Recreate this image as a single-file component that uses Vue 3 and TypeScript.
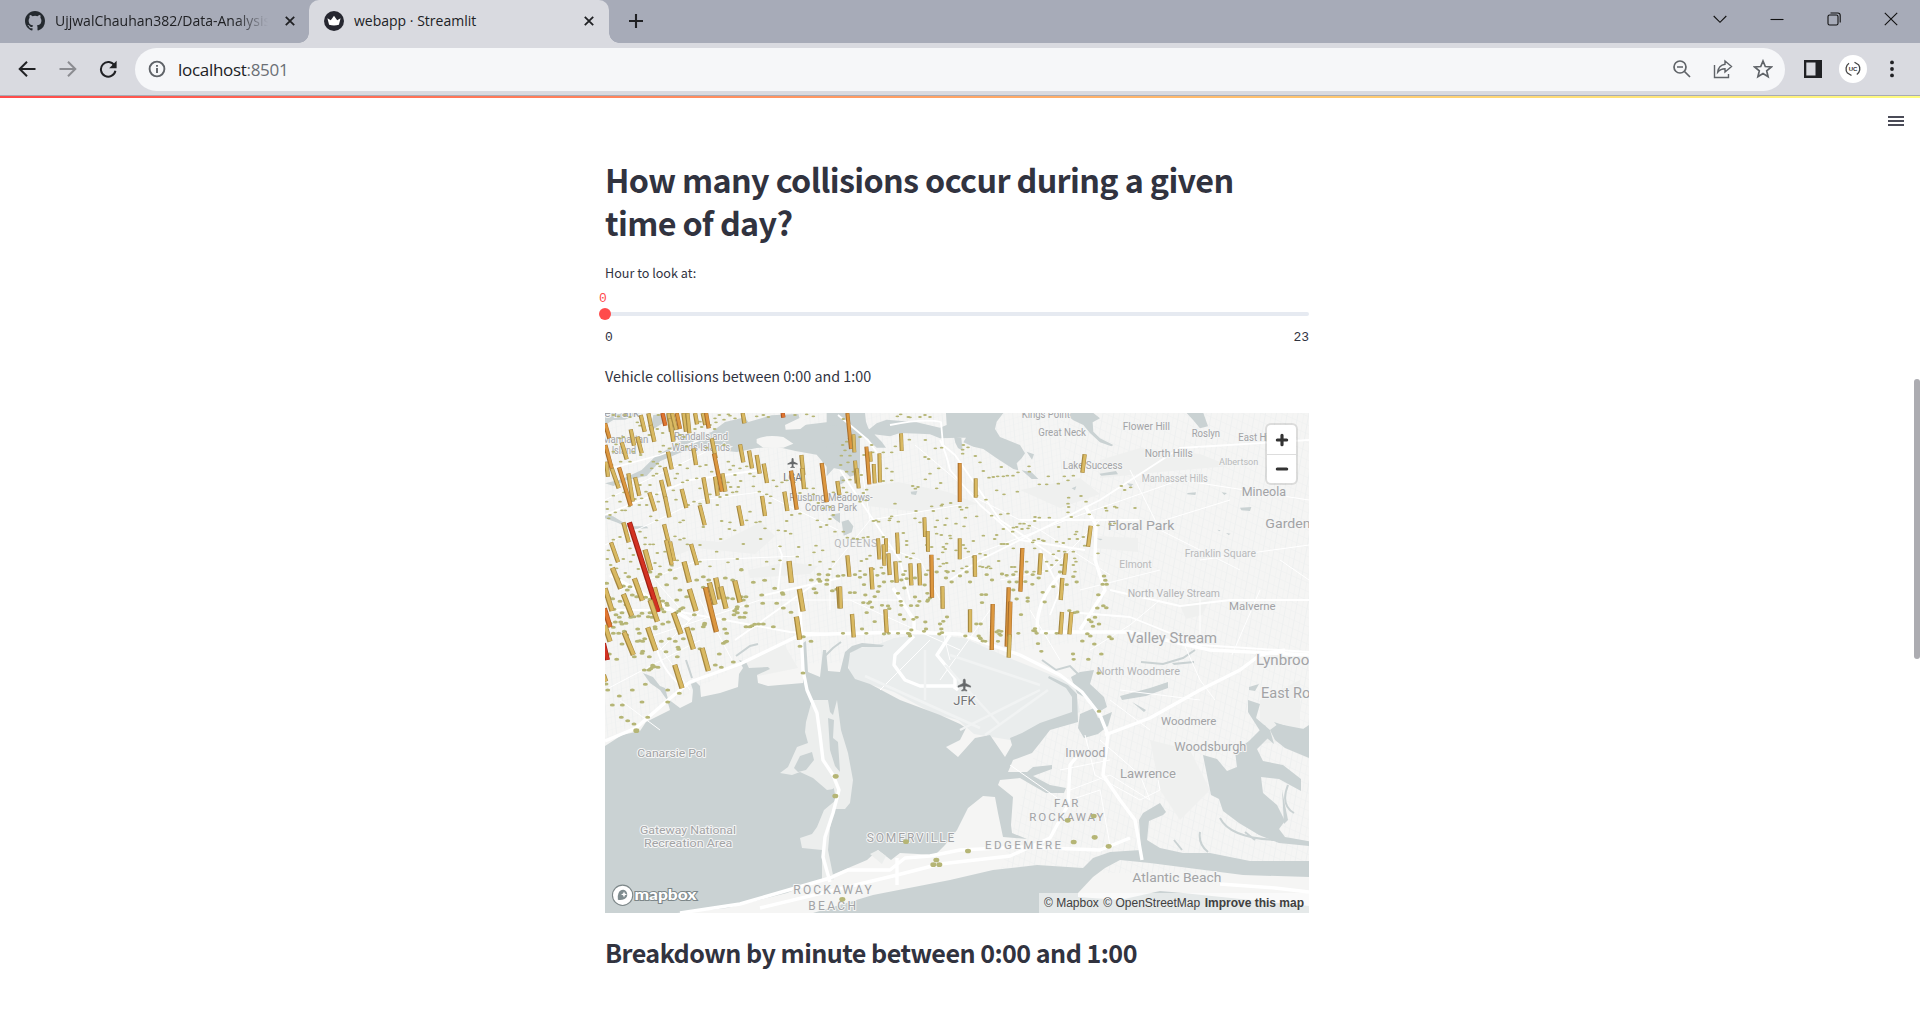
<script setup lang="ts">
type Kind = 'y' | 'o' | 'v' | 'r'
interface Tile {
  x: number
  y: number
  rx: number
  ry: number
  w: number
  dots: string
  bars: string
}
interface Label {
  t: string
  x: number
  y: number
  w: number
  s: number
  c?: string
}

/* Each tile stores its geometry in thirds of a pixel, relative to its origin. */
const tiles: Tile[] = [
  {
    x: 600, y: 405, rx: 5.6, ry: 2.8, w: 13,
    dots: '40,30 55,34 75,30 90,36 175,30 345,40 358,30 372,44 390,32 405,40 385,28 348,52 470,34 490,30 505,36 585,30 620,28 640,34 112,52 120,62 148,90 172,72 188,84 240,90 252,96 300,50 305,66 330,60 344,72 285,72 190,122 180,140 208,130 230,118 260,125 320,128 372,120 60,100 70,96 48,118 40,140 100,140 122,150 90,170 62,170 35,180 172,176 180,184 160,170 240,180 262,190 300,184 318,180 335,200 232,206 226,220 248,232 262,226 290,220 300,250 160,212 170,206 150,240 155,190 126,210 120,240 138,260 72,262 88,304 76,316 66,316 60,290 105,282 125,280 175,290 170,268 220,256 228,284 265,300 282,290 300,296 330,268 360,276 352,300 380,270 398,262 384,232 392,246 410,260 415,246 422,228 405,210 390,194 450,206 462,214 440,184 385,170 400,182 420,190 460,244 478,260 500,268 512,274 510,294 530,244 546,232 520,226 560,226 582,232 600,264 620,250 640,268 632,286 655,294 670,310 690,306 700,330 652,346 690,342 680,360 662,366 705,380 640,250 700,262 170,346 250,346 240,352 310,366 362,402 404,376 388,372 430,417 365,348 390,352 450,320 440,346 480,350 495,370 535,376 560,348 575,330 600,326 556,378 572,386 648,422 642,442 668,436 596,426 540,424 592,455 540,466 482,402 468,352 412,462 384,472 330,484 424,492 300,470 350,440 136,398 120,380 90,430 60,396 150,418 160,418 135,418 172,444 212,438 232,466 216,482 180,484 165,474 92,470 70,462 100,450 115,492 76,504 50,490 32,480 22,462 25,436 40,404 240,404 252,400 262,418 225,394 195,440 300,420 500,470 520,492 630,480 690,492 700,470 660,470 30,330 46,322 26,340 118,300 140,300 152,334 22,312 20,290 40,272',
    bars: 'v187,24,196,62 y122,30,134,80 y145,25,155,75 y152,60,163,110 y92,73,102,122 y112,95,125,145 y65,112,80,163 y205,24,213,80 y209,40,220,110 y216,24,228,75 o230,24,240,72 y250,24,258,80 y262,24,268,85 y285,24,291,58 y308,24,316,60 o318,24,326,70 y428,24,433,55 v548,24,550,38 y335,100,347,160 y204,140,215,193 y280,130,288,180 y420,118,430,172 y447,137,456,190 y470,150,479,206 y491,176,501,234 y604,150,610,210 y606,190,612,252 y367,205,376,260 o342,146,365,260 y345,215,353,272 y310,217,324,296 y553,260,562,318 o573,197,590,314 o665,174,680,292 y712,228,718,270 o15,55,28,100 y18,170,24,215 o16,120,36,195 y35,190,56,250 y85,205,98,290 o57,187,92,303 y105,217,118,272 y148,262,165,318 y194,187,208,244 y183,225,196,280 y195,275,208,337 y245,252,259,309 y299,301,314,361 y415,302,427,362 y486,273,495,333 y70,352,86,412 y33,412,54,472 y192,358,205,410 y210,410,222,468 y198,405,215,480 y273,417,291,480',
  },
  {
    x: 840, y: 405, rx: 5.6, ry: 2.8, w: 12,
    dots: '172,34 182,28 210,37 240,36 255,30 270,36 205,36 10,42 28,100 20,110 8,120 4,152 30,152 15,136 60,96 72,150 95,120 98,142 130,142 155,142 166,124 208,104 256,105 305,128 286,130 370,120 384,127 368,134 368,146 406,153 255,156 266,162 296,190 270,206 256,223 302,234 218,243 234,246 226,251 156,200 140,190 155,226 130,228 420,172 430,198 484,186 447,218 460,216 473,214 490,214 502,212 519,212 534,202 567,184 568,200 598,238 620,238 655,236 625,214 673,214 684,226 700,212 470,256 492,268 438,284 532,260 290,250 410,272 80,254 70,264 20,262 10,248 60,290 78,286 165,296 228,318 275,304 307,298 332,294 280,318 304,302 365,314 380,308 360,306 100,348 116,350 108,346 150,340 155,334 148,346 175,350 190,384 200,408 225,340 240,352 292,346 320,340 315,360 290,386 304,390 286,366 330,392 348,356 372,364 376,338 410,334 455,332 482,328 504,326 520,368 530,366 546,372 540,356 552,356 568,362 564,370 584,348 585,336 598,338 628,338 656,366 686,278 684,296 686,306 684,322 694,336 518,380 490,372 470,390 484,417 492,417 502,417 464,402 520,430 578,412 582,406 608,406 596,402 612,408 584,430 650,410 670,414 656,438 674,440 688,402 706,388 712,402 400,408 430,392 332,400 320,416 310,426 316,432 308,442 275,426 260,420 220,445 200,420 200,456 212,460 295,462 370,420 376,430 348,436 385,440 420,446 436,450 400,456 428,486 446,484 440,488 452,490 420,484 476,468 515,486 524,486 528,500 582,500 560,470 620,470 635,480 650,466 664,480 620,498 380,484 366,490 340,498 318,498 300,484 310,476 320,474 90,452 80,462 64,468 60,498 52,402 40,400 22,398 10,380 70,398 84,396 130,396 100,492 124,488 180,470 196,498 264,496 640,448 700,440 704,460 700,480 705,500 2,180 24,172 40,200 20,200 64,210 10,226 30,224',
    bars: 'o22,24,33,132 y40,88,43,142 y183,85,185,138 y90,140,92,170 o79,125,88,238 y101,177,104,235 y118,145,120,232 y45,167,50,235 y50,190,56,250 o359,174,359,291 y407,220,407,278 y253,337,255,396 y263,378,264,440 y359,400,359,463 y171,383,174,446 y138,400,138,440 y114,400,118,463 y130,418,133,482',
  },
  {
    x: 1080, y: 405, rx: 5.6, ry: 2.8, w: 13,
    dots: '124,243 134,255 152,247 77,309 80,317 104,305 110,308 165,309 18,290 3,273 28,328 54,361 90,357 104,355 10,396 14,422 54,445 -10,380 -12,470',
    bars: 'y14,148,7,203 y32,362,24,425',
  },
  {
    x: 600, y: 570, rx: 7.5, ry: 4.5, w: 16,
    dots: '180,13 226,25 172,20 424,0 376,24 398,30 460,37 494,31 524,55 485,75 547,68 549,73 657,13 684,14 681,30 656,28 634,30 680,43 660,34 642,56 648,68 697,62 714,18 710,58 488,100 550,114 573,127 530,100 438,170 450,170 464,163 476,162 490,162 456,167 520,170 440,108 424,80 430,90 438,80 404,122 410,116 402,134 420,142 432,142 412,128 436,128 372,148 374,177 283,134 313,164 310,170 278,177 314,160 249,113 242,117 236,123 228,128 200,100 202,106 188,93 185,118 192,125 176,84 137,82 150,88 97,75 110,80 90,50 82,60 70,48 26,82 38,86 60,94 78,104 42,118 66,128 48,134 58,142 62,156 78,160 46,156 40,172 30,160 66,162 92,142 102,140 116,138 126,130 150,128 145,140 156,142 165,170 166,176 188,162 205,156 113,177 118,190 73,184 56,190 40,190 80,195 66,222 120,212 128,214 112,214 134,206 184,214 208,206 226,214 250,206 270,200 198,245 234,232 236,238 232,260 148,260 128,244 126,250 103,260 50,268 28,252 133,300 147,300 157,292 158,286 174,292 164,290 152,296 136,343 97,360 58,378 23,360 18,342 37,405 67,405 126,396 203,360 238,370 203,396 64,442 83,452 102,462 109,482 143,442 400,276 364,292 346,285 358,252 380,214 370,220 376,216 633,214 600,229 609,309 610,200 300,236 380,190 210,0 150,6 20,40 54,26 86,20 200,44 240,60 260,80 230,90 310,20 326,30 290,30 310,52 382,84 398,86 412,110',
    bars: 'y37,-7,62,56 y252,-25,268,37 y567,-27,574,38 y135,-61,152,1 y103,25,127,92 y70,72,95,138 y163,52,180,115 r88,-143,174,126 y150,90,172,155 y15,55,36,123 v13,115,30,172 y14,165,30,215 r10,220,22,270 y10,315,17,335 y72,186,100,255 y143,172,167,242 y220,128,243,192 y268,57,288,123 y328,38,345,104 o316,52,349,186 y347,23,360,88 y362,50,378,116 y404,32,420,97 y598,57,609,124 y589,140,599,209 y716,50,720,115 y260,172,280,238 y306,234,325,303 y224,284,246,355',
  },
  {
    x: 840, y: 570, rx: 6.6, ry: 4.2, w: 13,
    dots: '10,16 45,14 60,22 75,14 72,44 118,49 132,36 112,16 130,10 156,34 184,30 190,14 200,26 193,54 225,24 225,81 258,14 254,45 262,70 290,6 318,24 323,6 335,36 360,18 380,6 390,36 425,74 438,74 426,98 456,30 440,14 486,12 500,16 508,36 530,36 520,14 560,6 556,35 577,43 563,84 563,94 530,87 608,67 614,96 640,50 660,6 680,44 700,20 710,36 30,68 44,68 76,75 70,98 85,100 90,96 104,80 96,112 126,106 144,108 148,116 114,65 174,70 182,94 184,106 213,107 232,107 238,94 262,94 270,84 264,90 80,128 104,155 66,177 79,190 9,190 180,134 192,148 220,148 230,142 174,190 208,192 210,198 214,180 204,190 258,177 252,184 256,156 304,177 306,188 298,192 300,162 310,154 321,141 409,162 422,162 416,198 422,206 428,213 436,214 420,204 376,198 535,190 543,134 470,186 478,192 484,184 476,182 474,214 482,196 585,176 580,182 590,190 618,190 586,184 594,221 604,244 699,252 701,268 704,128 712,126 688,122 146,190 132,192 650,190 520,60 596,24 578,14',
    bars: 'y22,-44,28,20 y145,-50,149,15 y93,-8,97,58 y166,-26,170,38 y211,-20,214,46 y237,-20,240,46 o274,-46,276,83 y404,-44,405,20 o547,-66,541,65 y602,-50,598,14 y678,-50,672,14 y307,49,308,116 y0,50,2,115 y36,132,41,202 y136,118,140,188 y390,118,390,187 o458,102,455,240 o506,52,500,230 o511,95,508,200 y509,193,506,263 y667,24,662,90 y666,126,661,193 y694,126,688,193',
  },
  {
    x: 1080, y: 570, rx: 7, ry: 4.5, w: 13,
    dots: '72,18 76,31 68,43 80,43 55,74 52,114 70,107 79,113 45,142 27,149 34,155 39,169 57,162 22,191 31,198 43,222 7,213 88,200 95,206 64,252 25,268 56,309 57,424',
    bars: '',
  },
  { x: 600, y: 730, rx: 9, ry: 7, w: 13, dots: '109,2 707,139 706,198 918,335 1009,390 1000,404 1018,404 727,508', bars: '' },
  { x: 950, y: 730, rx: 9, ry: 7, w: 13, dots: '353,271 431,258 371,336 434,322 476,349 54,363', bars: '' },
]

const paint: Record<Kind, [string, string]> = {
  y: ['#d9b962', '#a3863f'],
  o: ['#dc973f', '#a66d2c'],
  v: ['#e0752f', '#ab5421'],
  r: ['#d33222', '#9c1f14'],
}

const parsed = tiles.map((t) => ({
  ...t,
  tf: `translate(${t.x} ${t.y}) scale(.33333)`,
  pts: t.dots.split(' ').map((p) => p.split(',').map(Number)),
  cols: t.bars
    ? t.bars.split(' ').map((b) => {
        const [x1, y1, x2, y2] = b.slice(1).split(',').map(Number)
        const [fill, edge] = paint[b[0] as Kind]
        return { x1, y1, x2, y2, fill, edge }
      })
    : [],
}))

const L = (ox: number, oy: number, t: string, a: number, b: number, y: number, s: number, c?: string): Label => ({
  t, x: ox + a / 3, y: oy + y / 3, w: (b - a) / 3, s, c,
})
const labels: Label[] = [
  L(600, 405, 'e Park', 12, 118, 37, 12.5),
  L(600, 405, 'Manhattan', 6, 145, 113, 10),
  L(600, 405, 'Island', 35, 108, 146, 10),
  L(600, 405, 'Randalls and', 222, 384, 105, 10),
  L(600, 405, 'Wards Islands', 215, 390, 138, 10),
  L(600, 405, 'LGA', 550, 605, 227, 10.5, '#74777a'),
  L(600, 405, 'Flushing Meadows-', 568, 818, 288, 10),
  L(600, 405, 'Corona Park', 615, 771, 319, 10),
  L(840, 405, 'Kings Point', 545, 690, 38, 10),
  L(840, 405, 'Great Neck', 595, 738, 93, 10.5),
  L(840, 405, 'Lake Success', 668, 848, 191, 10.5),
  L(1080, 405, 'Flower Hill', 128, 270, 75, 10.5),
  L(1080, 405, 'Roslyn', 335, 420, 96, 10.5),
  L(1080, 405, 'East Hills', 475, 595, 107, 10.5),
  L(1080, 405, 'North Hills', 194, 338, 157, 10.5),
  L(1080, 405, 'Albertson', 417, 535, 180, 9.8, '#b9babb'),
  L(1080, 405, 'Manhasset Hills', 185, 383, 230, 10, '#b9babb'),
  L(1080, 405, 'Mineola', 485, 618, 272, 13),
  L(1080, 405, 'Garden City', 556, 774, 368, 13),
  L(1080, 405, 'Floral Park', 83, 283, 376, 13.5),
  L(1080, 405, 'Franklin Square', 314, 528, 456, 10.5, '#b9babb'),
  L(1080, 405, 'Elmont', 118, 215, 489, 10.5, '#b9babb'),
  L(1080, 570, 'North Valley Stream', 143, 420, 82, 10.5, '#b3b4b5'),
  L(1080, 570, 'Malverne', 447, 587, 120, 11.5),
  L(1080, 570, 'Valley Stream', 140, 411, 219, 14),
  L(1080, 570, 'Lynbrook', 528, 711, 286, 14),
  L(1080, 570, 'North Woodmere', 50, 300, 315, 11, '#b3b4b5'),
  L(1080, 570, 'East Rockaway', 543, 836, 384, 14),
  L(1080, 570, 'Woodmere', 243, 409, 464, 11.5),
  L(840, 570, 'JFK', 340, 407, 406, 13.5, '#747678'),
  L(600, 730, 'Canarsie Pol', 112, 317, 80, 11.5),
  L(600, 730, 'Gateway National', 120, 408, 311, 11.5),
  L(600, 730, 'Recreation Area', 132, 397, 352, 11.5),
  L(950, 730, 'Inwood', 346, 466, 80, 12),
  L(950, 730, 'Woodsburgh', 673, 889, 62, 12),
  L(950, 730, 'Lawrence', 510, 678, 144, 12.5),
  L(950, 730, 'Atlantic Beach', 547, 814, 455, 13),
]
const areas: Label[] = [
  L(840, 405, 'QUEENS', -17, 112, 425, 10.5, '#b9babb'),
  L(600, 730, 'SOMERVILLE', 800, 1063, 335, 12),
  L(600, 730, 'ROCKAWAY', 580, 815, 491, 12),
  L(600, 730, 'BEACH', 625, 768, 539, 12),
  L(950, 730, 'FAR', 312, 385, 230, 11.5),
  L(950, 730, 'ROCKAWAY', 238, 460, 274, 11.5),
  L(950, 730, 'EDGEMERE', 105, 333, 358, 11.5),
]
</script>

<template>
  <div class="window">
    <header class="tabs">
      <div class="tab idle">
        <svg class="fav" viewBox="0 0 16 16"><path fill="#24292f" d="M8 0C3.58 0 0 3.58 0 8c0 3.54 2.29 6.53 5.47 7.59.4.07.55-.17.55-.38 0-.19-.01-.82-.01-1.49-2.01.37-2.53-.49-2.69-.94-.09-.23-.48-.94-.82-1.13-.28-.15-.68-.52-.01-.53.63-.01 1.08.58 1.23.82.72 1.21 1.87.87 2.33.66.07-.52.28-.87.51-1.07-1.78-.2-3.64-.89-3.64-3.95 0-.87.31-1.59.82-2.15-.08-.2-.36-1.02.08-2.12 0 0 .67-.21 2.2.82a7.6 7.6 0 0 1 4 0c1.53-1.04 2.2-.82 2.2-.82.44 1.1.16 1.92.08 2.12.51.56.82 1.27.82 2.15 0 3.07-1.87 3.75-3.65 3.95.29.25.54.73.54 1.48 0 1.07-.01 1.93-.01 2.2 0 .21.15.46.55.38A8.01 8.01 0 0 0 16 8c0-4.42-3.58-8-8-8z" /></svg>
        <span class="name fade">UjjwalChauhan382/Data-Analysis</span>
        <svg class="x" viewBox="0 0 10 10"><path d="M.8.8l8.4 8.4M9.2.8L.8 9.2" /></svg>
      </div>
      <div class="tab active">
        <svg class="fav" viewBox="0 0 20 20"><circle cx="10" cy="10" r="10" fill="#262730" /><path fill="#fff" d="M3.4 7.2l3.4 2.1L10 4.7l3.2 4.6 3.4-2.1-1.7 6.6q-4.9 1.5-9.8 0z" /></svg>
        <span class="name">webapp · Streamlit</span>
        <svg class="x" viewBox="0 0 10 10"><path d="M.8.8l8.4 8.4M9.2.8L.8 9.2" /></svg>
      </div>
      <svg class="plus" viewBox="0 0 16 16"><path d="M8 1v14M1 8h14" /></svg>
      <div class="controls">
        <svg viewBox="0 0 14 14"><path d="M.7 4L7 10.3 13.3 4" /></svg>
        <svg viewBox="0 0 14 14"><path d="M.5 7.5h13" /></svg>
        <svg viewBox="0 0 14 14"><rect x="1" y="3" width="10" height="10" rx="1.6" /><path d="M3.5 1h7.3q2.4 0 2.4 2.4v7.2" /></svg>
        <svg viewBox="0 0 14 14"><path d="M.8.8l12.4 12.4M13.2.8L.8 13.2" /></svg>
      </div>
    </header>

    <nav class="toolbar">
      <svg class="nav back" viewBox="0 0 18 18"><path d="M17.5 9H2M9 1.700L1.700 9 9 16.300" /></svg>
      <svg class="nav fwd" viewBox="0 0 18 18"><path d="M.5 9H16M9 1.700L16.300 9 9 16.300" /></svg>
      <svg class="nav reload" viewBox="0 0 18 18"><path d="M15.500 5.600A7.300 7.300 0 1 0 16.400 10.800" /><path class="solid" d="M17.600.8v7.400h-7.400z" /></svg>
      <div class="omni">
        <svg class="info" viewBox="0 0 18 18"><circle cx="9" cy="9" r="7.4" /><path d="M9 8v5M9 5v1.800" /></svg>
        <span class="url">localhost<i>:8501</i></span>
        <svg class="o zoomi" viewBox="0 0 20 20"><circle cx="8" cy="8" r="6" /><path d="M12.500 12.500l5.500 5.500M5 8h6" /></svg>
        <svg class="o share" viewBox="0 0 20 20"><path d="M1.500 6v12.500h14V15" /><path d="M12 2l6.500 5.500L12 13v-3.300C8.500 9.700 6.500 11 4.700 13.200 5.200 9 7.500 6 12 5.300z" /></svg>
        <svg class="o star" viewBox="0 0 20 20"><path d="M10 2l2.300 5.500 6 .5-4.600 3.900 1.400 5.800L10 14.600l-5.100 3.100 1.400-5.800L1.700 8l6-.5z" /></svg>
      </div>
      <svg class="panel" viewBox="0 0 18 18"><path fill="#202124" fill-rule="evenodd" d="M0 0h18v18H0zM2.300 2.500v13H11.500v-13z" /></svg>
      <div class="avatar">
        <svg viewBox="0 0 28 28"><path d="M10 8.200a7 7 0 0 0-1.500 10M12.500 20.500l-4-2.500M17.800 19.500A7 7 0 0 0 19.500 9.600M15.500 7.300l4 2.500" /><text x="14" y="16.400" text-anchor="middle">UC</text></svg>
      </div>
      <svg class="kebab" viewBox="0 0 4 18"><circle cx="2" cy="2.400" r="1.900" /><circle cx="2" cy="9" r="1.900" /><circle cx="2" cy="15.400" r="1.900" /></svg>
    </nav>
    <div class="deco"></div>

    <div class="page">
      <svg class="burger" viewBox="0 0 16 12"><path d="M0 2h16M0 6h16M0 10h16" /></svg>
      <div class="thumbbar"></div>
      <main>
        <h2>How many collisions occur during a given<br />time of day?</h2>
        <label class="lbl">Hour to look at:</label>
        <div class="slider">
          <div class="val">0</div>
          <div class="track"><div class="knob"></div></div>
          <div class="ticks"><span>0</span><span>23</span></div>
        </div>
        <p>Vehicle collisions between 0:00 and 1:00</p>

        <div class="map">
          <svg class="canvas" viewBox="605 413 704 500">
            <defs>
              <pattern id="st1" width="9" height="6" patternUnits="userSpaceOnUse" patternTransform="rotate(-17) skewX(-12)"><path d="M0 0H9M0 0V6M4.500 0V6" stroke="#eef0f0" stroke-width=".8" fill="none" /></pattern>
              <pattern id="st2" width="11" height="8" patternUnits="userSpaceOnUse" patternTransform="rotate(24) skewX(14)"><path d="M0 0H11M0 0V8M5.500 0V8" stroke="#eef0f0" stroke-width=".9" fill="none" /></pattern>
            </defs>
            <rect x="605" y="413" width="704" height="500" fill="#f5f5f4" />
            <path fill="url(#st1)" d="M605 413H1060L1090 640 960 660 740 665 605 740z" />
            <path fill="url(#st2)" d="M1060 413h249v460H1000l40-140 50-100z" />
            <g class="park">
              <path d="M665 560l30-12 60 6 20-18-14-14-40 20-52-4zM862 488l36-6 50 10 30 12-60 8-50-6zM1020 490l60-12 20 16-40 14zM1100 460l40-12 60 6 30 12-70 6-60 6zM1092 536l46 2v14l-44-4zM1180 605l30-6-8 16-16 4zM748 570l40-8 30 4-8 8-60 4zM744 662l40-18 14 24-40 8zM1260 700l40-20v60l-40 4zM1150 740l40 10 20 40-30 30-20-30z" />
              <path fill="#eaeded" d="M848 656q6-10 24-9l22-9 30-4 40 4 50 22 60 24 6 28-40 16-30 12-36-6-16-14-24-6-40-22-44-14z" />
            </g>

            <g class="water">
              <g transform="translate(600 405) scale(.33333)">
                <path d="M15 60L40 45 75 44 120 24H15zM15 235l50-12 60-28 40-40 50-30 20-14 100-30 40-30 60-14 10 14 70-20 80-4 10 34 80-10 60 16 35-2v140l-30 10-20-20-50-10-30-36-60-10-60-14-60 4-60 12-60-6-60-6-50 14-60 26-40 44-60 12-40 18zM160 30l60-4-20 22-50 30zM15 330l24 4 50 30 50 0 6 6-50 2-46-20-34-12zM690 330l30-6v30l-14-10z" />
                <path class="land" d="M470 102q30-14 80-6l30 20-30 12-60 0-20-14zM555 60l50-24 16 20-20 16-44 2zM300 132l60-12 40 4-30 16-50 14z" />
              </g>
              <g transform="translate(840 405) scale(.33333)">
                <path d="M-40 24H75L78 50 85 70 125 110 138 128 110 128 80 100 40 90 0 62-40 60zM-40 120L0 110-10 180-40 214zM85 75L110 55 140 44 230 52 300 68 320 60 318 24H490L470 50 465 72 480 96 540 120 555 145 545 160 530 175 535 196 520 192 470 160 430 132 400 125 370 112 378 98 355 98 300 100 270 88 240 86 180 84 150 94 100 88zM545 196l30 6 20 20-20 0zM5 350l20-6 15 20-5 18-24 10zM0 215l14-4 0 20-14 8zM212 260l20-2-4 12-14-2zM560 140l22 8-6 16z" />
                <path d="M342 95l22 4 4 38-14-8-8-16zM695 250l14-6-4 12z" />
              </g>
              <g transform="translate(1080 405) scale(.33333)">
                <path d="M-40 24H40L60 40 38 52 40 80 60 100 100 120 94 124 60 112 30 84 10 60-20 46-40 30zM320 24h50l14 40-24 6-20-24zM58 206l50-8 6 10-50 4zM322 264l26-2-2 8-24-2zM480 308l34-2-4 12-26-2zM360 40l20 14-12 6zM140 235l20 2-8 8zM348 124l14 2-6 4zM46 400l22 2-6 4zM412 374l10 2-4 3zM438 384l14 2-6 4zM425 262l16 2-8 6z" />
              </g>
              <path d="M605 746L622 735 640 731 646 722 670 710 667 700 660 690 650 683 643 673 653 677 660 686 665 688 668 699 680 708 692 702 693 690 691 684 696 682 700 686 701 697 720 693 738 687 739 674 743 668 739 660 746 662 749 668 768 667 770 669 757 675 758 683 768 686 803 683V643L806 641 808 672 820 677 823 650 826 650 828 671 840 672 843 660 845 652 852 646 862 643 884 645 882 647 862 647 850 653 848 668 855 679 870 684 900 700 940 715 960 724 966 728 960 740 946 747 958 757 975 738 990 735 1005 757 1012 745 1010 738 1022 733 1040 723 1072 712 1072 697 1066 688 1048 678 1049 676 1068 685 1077 694 1078 722 1050 730 1040 743 1032 753 1013 760 1008 772 1027 772 1033 767 1052 765 1052 769 1033 776 1050 785 1066 788 1064 793 1046 793 1032 785 1020 778 1000 780 998 785 1013 797 1011 825 1012 833 1027 839 1003 837 998 813 995 797 983 796 968 808 957 830 945 845 935 855 900 853 891 860 878 850 867 860 827 877 787 893 727 908 677 913H605z" />
              <path d="M813 913L873 895 950 880 993 870 1037 865 1083 868 1093 858 1110 852 1141 850 1139 820 1143 813 1160 803 1166 812 1163 815 1149 821 1147 840 1160 848 1183 853 1210 853 1250 861 1309 861V877L1243 875 1150 863 1120 860 1105 868 1093 877 1078 893 1078 897 1120 900 1160 891 1183 893 1309 906V913z" />
              <path d="M1080 672l14-2-4 14 14 13 3 10-10 6-6-12-14-8-6-16zM1080 714l14-6 4 10 14-6-4 14-10 8-14 4-6-10zM1120 696l30-8 18-6v6l-22 8-24 4zM1132 702l14 8-2 2zM1249 687l10-3-4 7-6-1zM1172 663l22-2 0 2-20 2zM1248 700l12 4-4 14 14 12 4 14-12-10-14-22zM1309 725v30l-18-18zM1274 722l18 6-6 8z" />
              <path d="M1203 755l14 4 10 12 10-4-2-16 14-10 16-16 4 12-12 12 6 12 20 4 18 14v12l-22-12-18-2 2 16 14 12 8 16-6 8 6 8 34 6v4l-40-4-20-8-20-12-16-12-4-12-8-4z" />
              <path d="M1270 730l8-6 31 6v28l-24-10-10-8zM1273 830l6 12-6-2zM1282 790l6 30-4 4z" />
            </g>
            <g class="creek">
              <path d="M1195 650l-12 8-20 6-22-2M1174 840l8 10M1200 832q-2 12 8 20M1042 660l14 10 14-4 8 8M825 656l8-8 8-6M736 656l14-10 8-2M686 660l6 18M1220 818q10 20 56 22M1255 840l-10-8M1288 785q-8 20 6 28" />
            </g>
            <g class="isle">
              <path d="M812 700L806 722 805 732 808 743 797 747 788 767 780 773 792 775 800 772 813 778 827 790 834 789 836 800 824 810 817 827 812 834 800 838 802 848 822 850 822 880H834L828 850 830 828 834 809 845 809 850 803 853 780 848 753 841 730 837 700 833 715 830 712 828 700zM870 854l8-4 8 6-4 8z" />
              <path class="sea" d="M794 768l6-12 12-4 2 8-8 10-8 2zM828 718l6 2-1 18 5 4 2 30-5-6-5-16zM829 792l5-4 0 6z" />
            </g>

            <g class="road thin">
              <path d="M605 500L720 445M605 545L700 500 760 492 838 530M620 590L700 560 800 556M640 640L760 600 860 600 900 600M605 690L700 640M830 610V570L870 520 862 470M870 520L960 505" />
              <path d="M915 445L980 500 1040 530 1110 575M960 560L1080 515 1180 480 1309 500M1000 580L1050 570 1100 520M940 600L920 560 880 545M1130 470L1160 530 1240 570M1165 520L1230 500M1309 545L1200 560M1160 600L1130 625 1090 650M1180 635L1200 680 1215 700M1200 640V590M1232 655L1260 590M1110 700L1150 730M1120 690L1200 700M1060 770L1110 760M1085 735L1095 775 1140 800 1160 790 1158 780M1100 740L1140 775 1150 800M1070 790L1110 775 1150 800M1070 800L1100 790 1110 845M1280 560l29 20M930 640L880 690M1010 765L1060 800M1160 570L1080 590" />
              <path d="M655 580L690 620M660 650L700 610M700 600L732 660M655 640L690 690M850 600L960 650M940 620L950 660M990 610L940 680M1030 610L1060 660M620 700L660 730" />
            </g>
            <g class="road mid">
              <path d="M605 610L670 610 790 632 830 634M838 415L868 440 882 460M940 440Q946 452 950 470L980 505 1020 540 1085 550M890 425Q925 418 941 422L943 445 955 455 1000 520 1060 560M605 515L690 480 760 470M778 545L782 555 778 590M765 595L840 578M950 580L980 560 1100 500 1180 448 1309 440M1080 613L1130 617 1200 645 1309 652M1110 590L1180 606 1230 600 1309 600M1020 520L1060 520 1140 520M605 470L660 455 700 440M840 470L900 560 910 600M655 640Q660 670 682 686M735 640L820 580M1050 615L1060 590 1040 550" />
            </g>
            <g class="road">
              <path d="M605 741L636 728 668 700 690 682 740 664 800 635 830 634 905 632 960 634 1020 655 1060 675 1082 692 1100 715 1108 735 1103 775 1120 800 1135 820 1142 860" />
              <path d="M799 590L803 670 807 690 817 713 820 735 823 760 833 775 839 790 833 813 825 837 823 857 830 882" />
              <path d="M610 575L690 620M893 588L914 620 914 632M914 636L895 655 894 665 905 680 920 686 955 686 955 678 946 666 937 655 950 635M1060 575Q1036 600 1037 632M1085 506L1096 525 1095 560 1105 590 1080 630M954 687l4 3" />
              <path d="M1040 632H1130L1210 650 1309 655M1105 735L1150 718 1200 690 1240 670 1260 655 1285 650" />
              <path d="M680 913L740 904 830 878 848 870 890 870 905 858 930 856 960 850 1020 847 1100 850 1130 838M760 908L897 875 940 864 1010 856 1050 838 1068 805 1070 765 1078 755M897 858V885M1220 884L1275 888 1309 892" />
            </g>
            <g class="runway"><path d="M865 676L980 728M960 730L1040 690M985 735L1048 690M1000 725L945 665M950 655L1040 685M925 700L925 650" /></g>

            <g class="txt">
              <text v-for="l in labels" :key="l.t + l.x" :x="l.x" :y="l.y" :font-size="l.s" :textLength="l.w" :fill="l.c" lengthAdjust="spacingAndGlyphs">{{ l.t }}</text>
              <text v-for="l in areas" :key="l.t + l.x" :x="l.x" :y="l.y" :font-size="l.s" :textLength="l.w" :fill="l.c">{{ l.t }}</text>
            </g>
            <path class="plane big" d="M964.300 679c.9 0 1.100.9 1.100 2v2.300l5.200 2.600v1.300l-5.200-1.200-.4 3 1.900 1.200v.9l-2.600-.5-2.600.5v-.9l1.900-1.200-.4-3-5.200 1.200v-1.300l5.200-2.600V681c0-1.100.2-2 1.100-2z" />
            <path class="plane" transform="translate(-127 -226) scale(.95)" d="M968 720c.9 0 1.100.9 1.100 2v1.800l4.200 2v1.200l-4.200-.8-.3 2.600 1.500 1v.8l-2.300-.4-2.300.4v-.8l1.500-1-.3-2.600-4.200.8v-1.200l4.200-2V722c0-1.100.2-2 1.100-2z" />

            <g v-for="t in parsed" :key="t.x + '-' + t.y" :transform="t.tf">
              <ellipse v-for="(p, i) in t.pts" :key="i" class="dot" :cx="p[0]" :cy="p[1]" :rx="t.rx" :ry="t.ry" />
            </g>
            <g v-for="t in parsed" :key="'b' + t.x + '-' + t.y" :transform="t.tf">
              <template v-for="(b, i) in t.cols" :key="i">
                <path :d="`M${b.x1} ${b.y1}L${b.x2} ${b.y2}`" :stroke="b.edge" :stroke-width="t.w" />
                <path :d="`M${b.x1 + 1} ${b.y1 + 1}L${b.x2 + 1} ${b.y2 - 1}`" :stroke="b.fill" :stroke-width="t.w * 0.64" />
              </template>
            </g>

            <g class="logo">
              <circle cx="622.600" cy="895.300" r="8.900" fill="none" stroke="#7d8789" stroke-width="3.600" />
              <circle cx="622.600" cy="895.300" r="8.600" fill="#7f8c8f" stroke="#fff" stroke-width="2" />
              <path fill="#fff" d="M622.600 886.700a8.600 8.600 0 1 0 .01 0zM623.500 889.800a5 5 0 0 1 1 9.300q-3.500 1.400-6.600.6-.8-3.200.6-6.400a5 5 0 0 1 5-3.500z" fill-rule="evenodd" />
              <path fill="#fff" d="M624 891.400l.9 2.100 2.100.9-2.100.9-.9 2.100-.9-2.100-2.100-.9 2.100-.9z" />
              <text x="634.500" y="900" font-size="15.500" textLength="62" lengthAdjust="spacingAndGlyphs">mapbox</text>
            </g>
          </svg>
          <div class="zoom"><button><svg viewBox="0 0 12 12"><path d="M6 2v8M2 6h8" /></svg></button><button><svg viewBox="0 0 12 12"><path d="M2 6h8" /></svg></button></div>
          <div class="attrib"><span>© Mapbox</span><span>© OpenStreetMap</span><b>Improve this map</b></div>
        </div>
        <h3>Breakdown by minute between 0:00 and 1:00</h3>
      </main>
    </div>
  </div>
</template>

<style>
body { background: #fff; overflow: hidden; }
</style>

<style scoped>
.window { width: 1920px; height: 1020px; overflow: hidden; font-family: "Noto Sans CJK SC", sans-serif; color: #31333f; display: flex; flex-direction: column; }
svg { display: block; flex: none; }
.tabs { height: 43px; flex: none; background: #a7abb8; display: flex; align-items: center; font-family: "Open Sans", sans-serif; font-size: 14px; color: #202124; }
.tab { height: 43px; display: flex; align-items: center; box-sizing: border-box; }
.idle { width: 309px; padding: 0 14px 2px 25px; }
.active { width: 300px; padding: 0 15px 2px 15px; background: #d9dae0; border-radius: 10px 10px 0 0; position: relative; }
.active::before, .active::after { content: ""; position: absolute; bottom: 0; width: 10px; height: 10px; }
.active::before { left: -10px; background: radial-gradient(circle at 0 0, transparent 9.5px, #d9dae0 10px); }
.active::after { right: -10px; background: radial-gradient(circle at 100% 0, transparent 9.5px, #d9dae0 10px); }
.fav { width: 20px; height: 20px; }
.name { flex: 1; margin-left: 10px; white-space: nowrap; overflow: hidden; letter-spacing: 0; }
.fade { max-width: 213px; margin-right: 15px; -webkit-mask-image: linear-gradient(90deg, #000 180px, transparent 213px); mask-image: linear-gradient(90deg, #000 180px, transparent 213px); }
.x { width: 10px; height: 10px; fill: none; stroke: #202124; stroke-width: 1.8; }
.idle .x { margin-left: auto; }
.plus { width: 16px; height: 16px; margin: 0 0 1px 19px; fill: none; stroke: #202124; stroke-width: 2.1; }
.controls { margin-left: auto; display: flex; gap: 43px; padding: 0 22px 6px 0; }
.controls svg { width: 14px; height: 14px; fill: none; stroke: #111; stroke-width: 1.1; }
.toolbar { height: 52px; flex: none; background: #d9dae0; display: flex; align-items: center; border-bottom: 1px solid #a9abb3; box-sizing: content-box; }
.nav { width: 18px; height: 18px; fill: none; stroke: #202124; stroke-width: 2; }
.back { margin-left: 18px; }
.fwd { margin-left: 23px; stroke: #8b8c91; }
.reload { margin-left: 22px; }
.solid { fill: #202124; stroke: none; }
.omni { width: 1650px; margin-left: 18px; height: 43px; border-radius: 22px; background: #f6f7f9; display: flex; align-items: center; font-family: "Open Sans", sans-serif; font-size: 17px; color: #202124; }
.info { width: 18px; height: 18px; margin-left: 13px; fill: none; stroke: #5f6368; stroke-width: 1.9; }
.url { margin-left: 12px; flex: 1; letter-spacing: -.3px; }
.url i { font-style: normal; color: #6b6f75; }
.o { width: 20px; height: 20px; fill: none; stroke: #5f6368; stroke-width: 1.7; }
.zoomi { margin-right: 21px; }
.share { margin-right: 20px; stroke-width: 1.4; }
.star { margin-right: 12px; }
.panel { width: 18px; height: 18px; margin-left: 18.5px; }
.avatar { width: 28px; height: 28px; margin-left: 17px; border-radius: 50%; background: #fff; }
.avatar svg { width: 28px; height: 28px; fill: none; stroke: #444; stroke-width: 1.3; }
.avatar text { fill: #333; stroke: none; font: 700 6px "Liberation Sans", sans-serif; }
.kebab { width: 4px; height: 18px; margin-left: 23.500px; fill: #202124; }
.deco { height: 2px; flex: none; background: linear-gradient(90deg, #ff4b4b, #fffd80); }
.page { flex: 1; position: relative; }
.burger { position: absolute; right: 16px; top: 17px; width: 16px; height: 12px; stroke: #4a4b57; stroke-width: 1.9; }
.thumbbar { position: absolute; right: 0; top: 281px; width: 6px; height: 280px; border-radius: 3px; background: #acacb1; }
main { width: 704px; margin: 0 0 0 605px; padding-top: 60px; }
h2 { margin: 0; font-size: 32.3px; line-height: 43.2px; font-weight: 600; white-space: nowrap; letter-spacing: -.64px; }
.lbl { display: block; margin-top: 19px; font-size: 12.6px; line-height: 20px; height: 24px; }
.slider { height: 76px; }
.val { margin-left: -6px; padding-top: 3px; font-size: 13px; line-height: 18px; height: 22px; color: #ff4b4b; font-family: "Liberation Mono", monospace; }
.track { height: 4px; border-radius: 2px; background: #e6eaf1; display: flex; align-items: center; }
.knob { width: 12px; height: 12px; border-radius: 50%; margin-left: -6px; background: #ff4b4b; flex: none; }
.ticks { display: flex; justify-content: space-between; margin-top: 12px; font: 13px/20px "Liberation Mono", monospace; }
p { margin: 0; font-size: 14.35px; line-height: 26px; height: 50px; }
.map { position: relative; height: 500px; }
.canvas { width: 704px; height: 500px; }
.water { fill: #cad2d3; }
.land { fill: #f5f5f4; }
.park { fill: #eff0ef; }
.isle { fill: #eceeed; }
.sea { fill: #cad2d3; }
.creek { fill: none; stroke: #cad2d3; stroke-width: 2; }
.road { fill: none; stroke: #fff; stroke-width: 3.4; stroke-linejoin: round; }
.mid { stroke-width: 1.8; }
.thin { stroke-width: 1; }
.runway { fill: none; stroke: #f1f3f3; stroke-width: 2.5; }
.txt { font-family: Roboto, sans-serif; fill: #a2a3a5; stroke: #f4f5f5; stroke-width: 2px; paint-order: stroke; stroke-linejoin: round; }
.plane { fill: #66696b; }
.big { stroke: #66696b; stroke-width: .5; }
.dot { fill: #b5b575; }
.logo text { font-family: Lato, sans-serif; font-weight: 900; fill: #fff; stroke: #7d8789; stroke-width: 2px; paint-order: stroke; }
.zoom { position: absolute; right: 13px; top: 12px; width: 29px; height: 58px; background: #fff; border-radius: 4px; box-shadow: 0 0 0 2px rgba(0, 0, 0, .1); display: flex; flex-direction: column; }
.zoom button { flex: 1; border: 0; padding: 0; background: none; display: flex; align-items: center; justify-content: center; }
.zoom button + button { border-top: 1px solid #ddd; }
.zoom svg { width: 14px; height: 14px; fill: none; stroke: #333; stroke-width: 2.7; stroke-linecap: round; }
.attrib { position: absolute; right: 0; bottom: 0; height: 20px; width: 270px; box-sizing: border-box; padding: 0 5px; background: rgba(255, 255, 255, .5); display: flex; justify-content: space-between; font: 12px/20px "Liberation Sans", sans-serif; color: #404040; white-space: nowrap; }
h3 { margin: 19px 0 0; font-size: 25.1px; line-height: 40px; font-weight: 600; white-space: nowrap; letter-spacing: -.53px; }
</style>
